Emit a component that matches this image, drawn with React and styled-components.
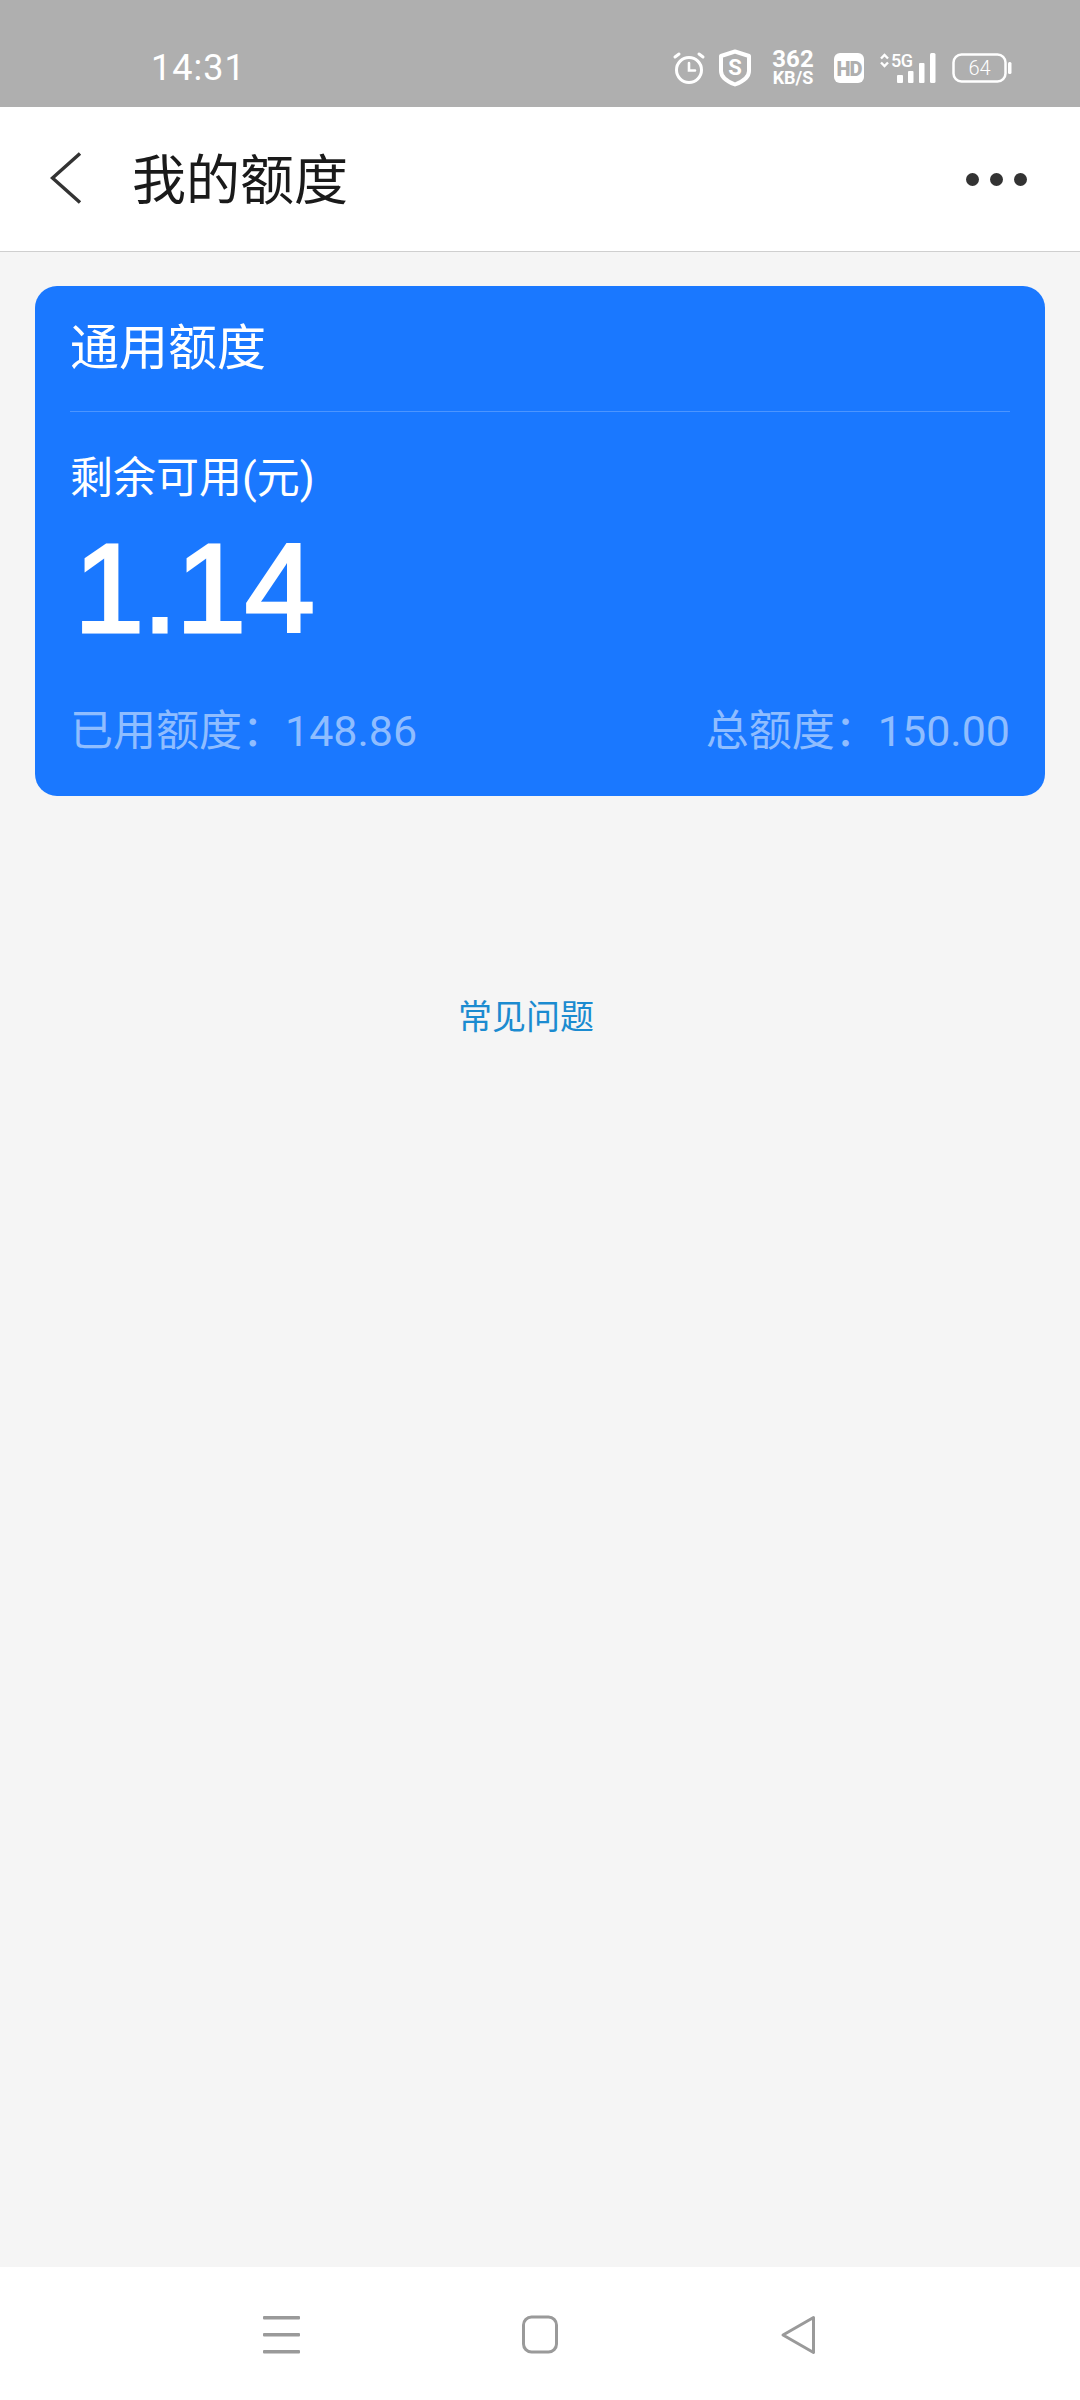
import React from "react";
import styled, { createGlobalStyle } from "styled-components";

const Global = createGlobalStyle`
  html, body { margin: 0; padding: 0; background: #f5f5f5; }
  * { box-sizing: border-box; }
  body { font-family: Roboto, "Noto Sans CJK SC", sans-serif; }
`;

const Page = styled.div`
  width: 1080px;
  height: 2400px;
  display: flex;
  flex-direction: column;
  background: #f5f5f5;
  overflow: hidden;
`;

//Status bar
const StatusBar = styled.div`
  height: 107px;
  flex: none;
  background: #afafaf;
  display: flex;
  align-items: center;
  justify-content: space-between;
  padding: 28px 68px 0 151px;
  color: #fff;
`;
const Clock = styled.span`
  font-size: 36px;
  letter-spacing: 1px;
  line-height: 1;
`;
const StatusIcons = styled.div`
  display: flex;
  align-items: center;
`;
const Glyph = styled.svg`
  flex: none;
  margin-left: ${props => props.$gap || 0}px;
  margin-top: ${props => props.$lift || 0}px;
`;
const Speed = styled.div`
  width: 44px;
  margin: 0 19px;
  display: flex;
  flex-direction: column;
  align-items: center;
  font-weight: 700;
  line-height: 1;
`;
const SpeedValue = styled.span`
  font-size: 24px;
  line-height: 20px;
`;
const SpeedUnit = styled.span`
  font-size: 18px;
  line-height: 16px;
  margin-top: 1px;
`;

//Header
const Header = styled.header`
  height: 145px;
  flex: none;
  background: #fff;
  border-bottom: 1px solid #cfcfcf;
  display: flex;
  align-items: center;
  padding: 0 53px 0 50px;
`;
const Title = styled.h1`
  margin: -5px 0 0 50px;
  flex: 1;
  font-size: 54px;
  font-weight: 400;
  color: #1a1a1a;
  font-family: "Noto Sans CJK SC", sans-serif;
  line-height: 1;
`;
const Dots = styled.div`
  display: flex;
  gap: 11px;
`;
const Dot = styled.span`
  width: 13px;
  height: 13px;
  border-radius: 50%;
  background: #333;
`;

//Quota card
const Card = styled.section`
  margin: 34px 35px 0;
  height: 510px;
  flex: none;
  border-radius: 22px;
  background: #1a78ff;
  padding: 0 35px;
  color: #fff;
`;
const CardTitle = styled.div`
  height: 126px;
  padding-bottom: 11px;
  display: flex;
  align-items: center;
  font-size: 49px;
  font-family: "Noto Sans CJK SC", sans-serif;
  line-height: 1;
  border-bottom: 1px solid rgba(255, 255, 255, 0.22);
`;
const Label = styled.div`
  margin-top: 39px;
  font-size: 43px;
  line-height: 54px;
`;
const Amount = styled.div`
  margin: 24px 0 0 4px;
  font-size: 126px;
  line-height: 120px;
  letter-spacing: -1.5px;
  font-family: "Liberation Sans", sans-serif;
  -webkit-text-stroke: 3px #fff;
`;
const Stats = styled.div`
  margin-top: 55px;
  display: flex;
  justify-content: space-between;
  color: #8fbdff;
  font-size: 43px;
  line-height: 54px;
`;

const FaqRow = styled.div`
  margin-top: 197px;
  padding-left: 458px;
`;
const Faq = styled.a`
  font-size: 34px;
  line-height: 44px;
  color: #1b8bd0;
  font-family: "Noto Sans CJK SC", sans-serif;
`;

//Navigation bar
const NavBar = styled.nav`
  margin-top: auto;
  height: 133px;
  flex: none;
  background: #fff;
  display: flex;
  align-items: flex-start;
  padding: 48px 0 0 262px;
`;
const NavSlot = styled.div`
  width: 259px;
  display: flex;
`;

const Alarm = () => (
  <Glyph width="34" height="34" viewBox="0 0 34 34" fill="none" stroke="#fff" strokeLinecap="round">
    <circle cx="17" cy="19" r="12.500" strokeWidth="3" />
    <path d="M17 12v7.500h6" strokeWidth="2.600" />
    <path d="M3 6l4-3M31 6l-4-3" strokeWidth="3" />
  </Glyph>
);

const Shield = () => (
  <Glyph $gap={12} width="34" height="38" viewBox="0 0 34 38" fill="none">
    <path d="M17 2.500L31 7v15c0 6-6 10.500-14 13.500C9 32.500 3 28 3 22V7z" stroke="#fff" strokeWidth="4" strokeLinejoin="round" />
    <text x="17" y="26" textAnchor="middle" fontSize="22" fontWeight="700" fontFamily="Roboto" fill="#fff">S</text>
  </Glyph>
);

const HdBadge = () => (
  <Glyph width="30" height="30" viewBox="0 0 30 30">
    <rect width="30" height="30" rx="6" fill="#fff" />
    <text x="15" y="22.500" textAnchor="middle" fontSize="20" fontWeight="900" letterSpacing="-1" fontFamily="Roboto" fill="#afafaf">HD</text>
  </Glyph>
);

const Signal = () => (
  <Glyph $gap={13} $lift={-2} width="60" height="34" viewBox="0 -2 60 34" fill="#fff">
    <path d="M4 6.500l3.500-3.500 3.500 3.500M4 10.500l3.500 3.500 3.500-3.500" fill="none" stroke="#fff" strokeWidth="2.400" />
    <text x="14" y="15" fontSize="18" fontWeight="500" letterSpacing="-0.500" fontFamily="Roboto">5G</text>
    <rect x="20" y="23" width="6" height="8" rx="1" />
    <rect x="31" y="19" width="5.500" height="12" rx="1" />
    <rect x="42" y="11" width="5.500" height="20" rx="1" />
    <rect x="53" y="1" width="5.500" height="30" rx="1.500" />
  </Glyph>
);

const Battery = () => (
  <Glyph $gap={15} width="60" height="30" viewBox="0 0 60 30" fill="none">
    <rect x="1.500" y="1.500" width="52" height="27" rx="8" stroke="#fff" strokeWidth="2.500" />
    <rect x="56" y="9" width="3.500" height="12" rx="1.500" fill="#fff" />
    <text x="27.500" y="22" textAnchor="middle" fontSize="20" fontWeight="300" fontFamily="Roboto" fill="#fff">64</text>
  </Glyph>
);

const BackIcon = () => (
  <Glyph $lift={-3} width="32" height="52" viewBox="0 0 32 52" fill="none">
    <path d="M30 1.500L2.500 26 30 50.500" stroke="#333" strokeWidth="3.500" />
  </Glyph>
);

const MenuIcon = () => (
  <Glyph width="40" height="40" viewBox="0 0 40 40" fill="#9a9a9a">
    <rect x="1" y="1" width="37" height="3.500" rx="1" />
    <rect x="1" y="18" width="37" height="3.500" rx="1" />
    <rect x="1" y="35" width="37" height="3.500" rx="1" />
  </Glyph>
);

const HomeIcon = () => (
  <Glyph width="40" height="40" viewBox="0 0 40 40" fill="none">
    <rect x="2.500" y="2" width="33" height="35" rx="8" stroke="#9a9a9a" strokeWidth="3" />
  </Glyph>
);

const TriangleIcon = () => (
  <Glyph width="40" height="40" viewBox="0 0 40 40" fill="none">
    <path d="M33.500 2.500L3 20l30.500 17.500z" stroke="#9a9a9a" strokeWidth="3" strokeLinejoin="round" />
  </Glyph>
);

const App = () => (
  <Page>
    <Global />
    <StatusBar>
      <Clock>14:31</Clock>
      <StatusIcons>
        <Alarm />
        <Shield />
        <Speed>
          <SpeedValue>362</SpeedValue>
          <SpeedUnit>KB/S</SpeedUnit>
        </Speed>
        <HdBadge />
        <Signal />
        <Battery />
      </StatusIcons>
    </StatusBar>
    <Header>
      <BackIcon />
      <Title>我的额度</Title>
      <Dots>
        <Dot />
        <Dot />
        <Dot />
      </Dots>
    </Header>
    <Card>
      <CardTitle>通用额度</CardTitle>
      <Label>剩余可用(元)</Label>
      <Amount>1.14</Amount>
      <Stats>
        <span>已用额度：148.86</span>
        <span>总额度：150.00</span>
      </Stats>
    </Card>
    <FaqRow>
      <Faq>常见问题</Faq>
    </FaqRow>
    <NavBar>
      <NavSlot>
        <MenuIcon />
      </NavSlot>
      <NavSlot>
        <HomeIcon />
      </NavSlot>
      <NavSlot>
        <TriangleIcon />
      </NavSlot>
    </NavBar>
  </Page>
);

export default App;
